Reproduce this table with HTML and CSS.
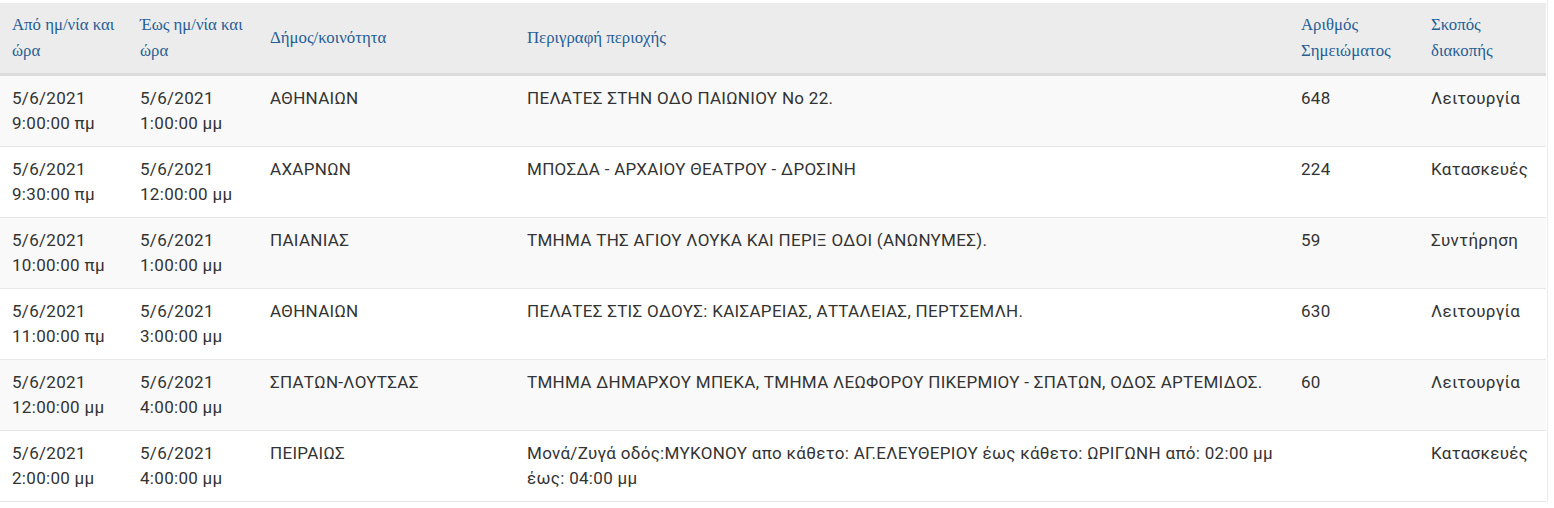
FILE: index.html
```html
<!DOCTYPE html>
<html lang="el">
<head>
<meta charset="utf-8">
<title>Διακοπές</title>
<link rel="stylesheet" href="styles.css">
</head>
<body>
<div class="wrap">
<table class="outages">
  <colgroup>
    <col class="c-from"><col class="c-to"><col class="c-muni"><col class="c-desc"><col class="c-num"><col class="c-purpose">
  </colgroup>
  <thead>
    <tr>
      <th>Από ημ/νία και ώρα</th>
      <th>Έως ημ/νία και ώρα</th>
      <th>Δήμος/κοινότητα</th>
      <th>Περιγραφή περιοχής</th>
      <th>Αριθμός Σημειώματος</th>
      <th>Σκοπός διακοπής</th>
    </tr>
  </thead>
  <tbody>
    <tr>
      <td>5/6/2021<br>9:00:00 πμ</td>
      <td>5/6/2021<br>1:00:00 μμ</td>
      <td>ΑΘΗΝΑΙΩΝ</td>
      <td>ΠΕΛΑΤΕΣ ΣΤΗΝ ΟΔΟ ΠΑΙΩΝΙΟΥ Νο 22.</td>
      <td>648</td>
      <td>Λειτουργία</td>
    </tr>
    <tr>
      <td>5/6/2021<br>9:30:00 πμ</td>
      <td>5/6/2021<br>12:00:00 μμ</td>
      <td>ΑΧΑΡΝΩΝ</td>
      <td>ΜΠΟΣΔΑ - ΑΡΧΑΙΟΥ ΘΕΑΤΡΟΥ - ΔΡΟΣΙΝΗ</td>
      <td>224</td>
      <td>Κατασκευές</td>
    </tr>
    <tr>
      <td>5/6/2021<br>10:00:00 πμ</td>
      <td>5/6/2021<br>1:00:00 μμ</td>
      <td>ΠΑΙΑΝΙΑΣ</td>
      <td>ΤΜΗΜΑ ΤΗΣ ΑΓΙΟΥ ΛΟΥΚΑ ΚΑΙ ΠΕΡΙΞ ΟΔΟΙ (ΑΝΩΝΥΜΕΣ).</td>
      <td>59</td>
      <td>Συντήρηση</td>
    </tr>
    <tr>
      <td>5/6/2021<br>11:00:00 πμ</td>
      <td>5/6/2021<br>3:00:00 μμ</td>
      <td>ΑΘΗΝΑΙΩΝ</td>
      <td>ΠΕΛΑΤΕΣ ΣΤΙΣ ΟΔΟΥΣ: ΚΑΙΣΑΡΕΙΑΣ, ΑΤΤΑΛΕΙΑΣ, ΠΕΡΤΣΕΜΛΗ.</td>
      <td>630</td>
      <td>Λειτουργία</td>
    </tr>
    <tr>
      <td>5/6/2021<br>12:00:00 μμ</td>
      <td>5/6/2021<br>4:00:00 μμ</td>
      <td>ΣΠΑΤΩΝ-ΛΟΥΤΣΑΣ</td>
      <td>ΤΜΗΜΑ ΔΗΜΑΡΧΟΥ ΜΠΕΚΑ, ΤΜΗΜΑ ΛΕΩΦΟΡΟΥ ΠΙΚΕΡΜΙΟΥ - ΣΠΑΤΩΝ, ΟΔΟΣ ΑΡΤΕΜΙΔΟΣ.</td>
      <td>60</td>
      <td>Λειτουργία</td>
    </tr>
    <tr>
      <td>5/6/2021<br>2:00:00 μμ</td>
      <td>5/6/2021<br>4:00:00 μμ</td>
      <td>ΠΕΙΡΑΙΩΣ</td>
      <td>Μονά/Ζυγά οδός:ΜΥΚΟΝΟΥ απο κάθετο: ΑΓ.ΕΛΕΥΘΕΡΙΟΥ έως κάθετο: ΩΡΙΓΩΝΗ από: 02:00 μμ έως: 04:00 μμ</td>
      <td></td>
      <td>Κατασκευές</td>
    </tr>
  </tbody>
</table>
</div>
</body>
</html>
```

FILE: styles.css
```css
html, body {
  margin: 0;
  padding: 0;
  background: #ffffff;
}
.wrap {
  padding-top: 3px;
  width: 1547px;
  border-right: 1px solid #ececec;
}
.outages {
  width: 1546px;
  border-collapse: collapse;
  table-layout: fixed;
  font-family: Roboto, "Noto Sans", sans-serif;
  font-size: 17px;
  letter-spacing: 0.3px;
  color: #333333;
}
.c-from { width: 128px; }
.c-to { width: 130px; }
.c-muni { width: 257px; }
.c-desc { width: 774px; }
.c-num { width: 130px; }
.c-purpose { width: 127px; }

.outages th {
  background: #ececec;
  color: #255e97;
  font-family: "Liberation Serif", "Times New Roman", serif;
  font-weight: normal;
  font-size: 16.8px;
  letter-spacing: 0;
  line-height: 26px;
  text-align: left;
  vertical-align: middle;
  padding: 9px 10px 9px 12px;
  height: 51px;
  border-bottom: 3px solid #dcdcdc;
}
.outages td {
  vertical-align: top;
  text-align: left;
  line-height: 25px;
  padding: 10px 10px 10px 12px;
  border-bottom: 1px solid #e6e6e6;
}
.outages tbody tr:nth-child(odd) td {
  background: #f9f9f9;
}
.outages tbody tr:nth-child(even) td {
  background: #ffffff;
}
```
